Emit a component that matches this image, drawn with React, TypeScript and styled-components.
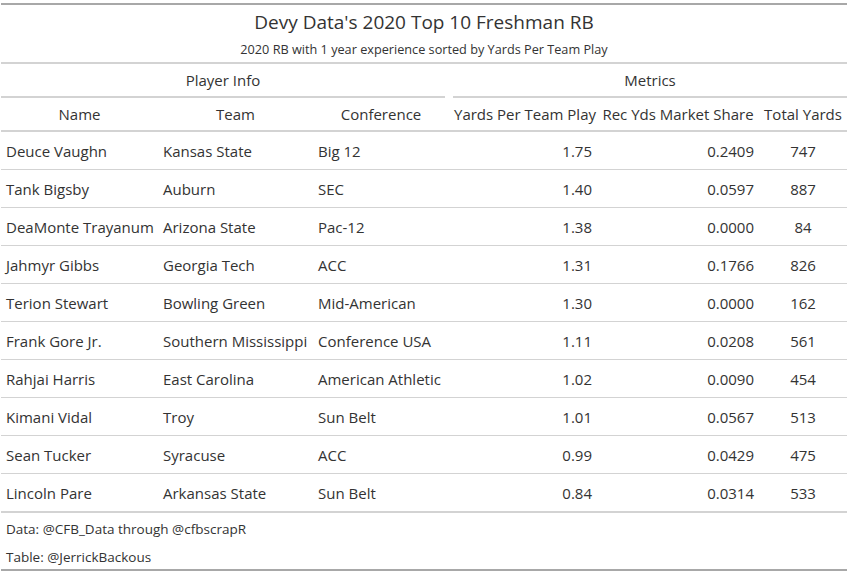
import React from "react";
import styled, { createGlobalStyle } from "styled-components";

const GlobalStyle = createGlobalStyle`
  body {
    margin: 0;
    background: #fff;
    font-family: "Open Sans", "Noto Sans", sans-serif;
  }
`;

const Wrapper = styled.div`
  width: 849px;
  height: 574px;
  padding: 3px 2px 0 1px;
  box-sizing: border-box;
`;

const Table = styled.table`
  width: 846px;
  border-collapse: collapse;
  table-layout: fixed;
  color: #333333;
  font-size: 15px;
  border-top: 2px solid #a8a8a8;
  border-bottom: 2px solid #a8a8a8;
`;

const TitleCell = styled.th`
  font-size: 19px;
  font-weight: 400;
  text-align: center;
  padding: 3px 5px 0;
  height: 28px;
`;

const SubtitleCell = styled.th`
  font-size: 12.7px;
  font-weight: 400;
  text-align: center;
  padding: 0 5px;
  height: 26px;
  border-bottom: 2px solid #d3d3d3;
`;

const SpannerCell = styled.th<{ $left?: boolean }>`
  font-weight: 400;
  padding: 0;
  padding-left: ${(p) => (p.$left ? "0" : "4px")};
  padding-right: ${(p) => (p.$left ? "4px" : "0")};
  height: 34px;
  vertical-align: bottom;
`;

const SpannerLabel = styled.div`
  border-bottom: 2px solid #d3d3d3;
  height: 32px;
  line-height: 32px;
  text-align: center;
`;

const LabelRow = styled.tr`
  border-bottom: 2px solid #d3d3d3;
`;

const Label = styled.th<{ $align: string }>`
  font-weight: 400;
  height: 32px;
  padding: 0 5px;
  text-align: ${(p) => p.$align};
  white-space: nowrap;
`;

const Row = styled.tr`
  & + & {
    border-top: 1px solid #d3d3d3;
  }
`;

const Cell = styled.td<{ $align: string }>`
  height: 37px;
  padding: 0 5px;
  text-align: ${(p) => p.$align};
  white-space: nowrap;
`;

const FootRow = styled.tr<{ $first?: boolean }>`
  border-top: ${(p) => (p.$first ? "2px solid #d3d3d3" : "none")};
`;

const Foot = styled.td`
  font-size: 13.5px;
  padding: 3px 5px 0;
  height: 25px;
`;

type Column = { key: string; label: string; width: number; align: string };

const columns: Column[] = [
  { key: "name", label: "Name", width: 157, align: "left" },
  { key: "team", label: "Team", width: 155, align: "left" },
  { key: "conf", label: "Conference", width: 136, align: "left" },
  { key: "yptp", label: "Yards Per Team Play", width: 148, align: "right" },
  { key: "rec", label: "Rec Yds Market Share", width: 162, align: "right" },
  { key: "yds", label: "Total Yards", width: 88, align: "center" },
];

const rows = [
  ["Deuce Vaughn", "Kansas State", "Big 12", "1.75", "0.2409", "747"],
  ["Tank Bigsby", "Auburn", "SEC", "1.40", "0.0597", "887"],
  ["DeaMonte Trayanum", "Arizona State", "Pac-12", "1.38", "0.0000", "84"],
  ["Jahmyr Gibbs", "Georgia Tech", "ACC", "1.31", "0.1766", "826"],
  ["Terion Stewart", "Bowling Green", "Mid-American", "1.30", "0.0000", "162"],
  ["Frank Gore Jr.", "Southern Mississippi", "Conference USA", "1.11", "0.0208", "561"],
  ["Rahjai Harris", "East Carolina", "American Athletic", "1.02", "0.0090", "454"],
  ["Kimani Vidal", "Troy", "Sun Belt", "1.01", "0.0567", "513"],
  ["Sean Tucker", "Syracuse", "ACC", "0.99", "0.0429", "475"],
  ["Lincoln Pare", "Arkansas State", "Sun Belt", "0.84", "0.0314", "533"],
];

export default function App() {
  return (
    <Wrapper>
      <GlobalStyle />
      <Table>
        <colgroup>
          {columns.map((c) => (
            <col key={c.key} style={{ width: c.width }} />
          ))}
        </colgroup>
        <thead>
          <tr>
            <TitleCell colSpan={6}>Devy Data's 2020 Top 10 Freshman RB</TitleCell>
          </tr>
          <tr>
            <SubtitleCell colSpan={6}>2020 RB with 1 year experience sorted by Yards Per Team Play</SubtitleCell>
          </tr>
          <tr>
            <SpannerCell colSpan={3} $left>
              <SpannerLabel>Player Info</SpannerLabel>
            </SpannerCell>
            <SpannerCell colSpan={3}>
              <SpannerLabel>Metrics</SpannerLabel>
            </SpannerCell>
          </tr>
          <LabelRow>
            {columns.map((c) => (
              <Label key={c.key} $align="center">
                {c.label}
              </Label>
            ))}
          </LabelRow>
        </thead>
        <tbody>
          {rows.map((r) => (
            <Row key={r[0]}>
              {r.map((v, i) => (
                <Cell key={i} $align={columns[i].align}>
                  {v}
                </Cell>
              ))}
            </Row>
          ))}
        </tbody>
        <tfoot>
          <FootRow $first>
            <Foot colSpan={6}>Data: @CFB_Data through @cfbscrapR</Foot>
          </FootRow>
          <FootRow>
            <Foot colSpan={6}>Table: @JerrickBackous</Foot>
          </FootRow>
        </tfoot>
      </Table>
    </Wrapper>
  );
}
